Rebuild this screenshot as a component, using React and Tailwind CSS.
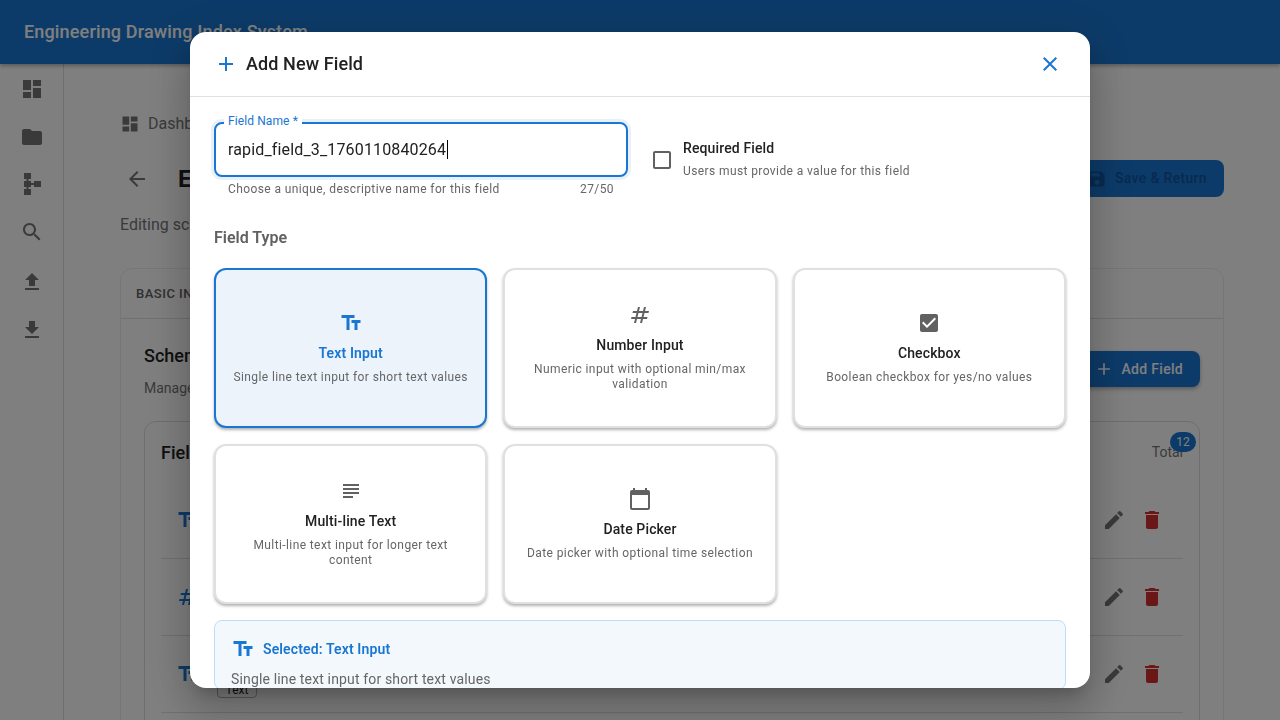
const paths = {
  dashboard: "M3 13h8V3H3v10zm0 8h8v-6H3v6zm10 0h8V11h-8v10zm0-18v6h8V3h-8z",
  folder: "M10 4H4c-1.1 0-1.99.9-1.99 2L2 18c0 1.1.9 2 2 2h16c1.1 0 2-.9 2-2V8c0-1.1-.9-2-2-2h-8l-2-2z",
  schema: "M14 9v2h-3V9H8.5V7H11V1H4v6h2.5v2H4v6h2.5v2H4v6h7v-6H8.5v-2H11v-2h3v2h7V9h-7z",
  search: "M15.5 14h-.79l-.28-.27C15.41 12.59 16 11.11 16 9.5 16 5.91 13.09 3 9.5 3S3 5.91 3 9.5 5.91 16 9.5 16c1.61 0 3.09-.59 4.23-1.57l.27.28v.79l5 4.99L20.49 19l-4.99-5zm-6 0C7.01 14 5 11.99 5 9.5S7.01 5 9.5 5 14 7.01 14 9.5 11.99 14 9.5 14z",
  upload: "M9 16h6v-6h4l-7-7-7 7h4zm-4 2h14v2H5z",
  download: "M19 9h-4V3H9v6H5l7 7 7-7zM5 18v2h14v-2H5z",
  back: "M20 11H7.83l5.59-5.59L12 4l-8 8 8 8 1.41-1.41L7.83 13H20v-2z",
  save: "M17 3H5c-1.11 0-2 .9-2 2v14c0 1.1.89 2 2 2h14c1.1 0 2-.9 2-2V7l-4-4zm-5 16c-1.66 0-3-1.34-3-3s1.34-3 3-3 3 1.34 3 3-1.34 3-3 3zm3-10H5V5h10v4z",
  add: "M19 13h-6v6h-2v-6H5v-2h6V5h2v6h6v2z",
  close: "M19 6.41 17.59 5 12 10.59 6.41 5 5 6.41 10.59 12 5 17.59 6.41 19 12 13.41 17.59 19 19 17.59 13.41 12z",
  edit: "M3 17.25V21h3.75L17.81 9.94l-3.75-3.75L3 17.25zM20.71 7.04c.39-.39.39-1.02 0-1.41l-2.34-2.34a.9959.9959 0 0 0-1.41 0l-1.83 1.83 3.75 3.75 1.83-1.83z",
  trash: "M6 19c0 1.1.9 2 2 2h8c1.1 0 2-.9 2-2V7H6v12zM19 4h-3.5l-1-1h-5l-1 1H5v2h14V4z",
  text: "M2.5 4v3h5v12h3V7h5V4h-13zm19 5h-9v3h3v7h3v-7h3V9z",
  number: "M20.5 10l.5-2h-4l1-4h-2l-1 4h-4l1-4h-2L9 8H5l-.5 2h4l-1 4h-4L3 16h4l-1 4h2l1-4h4l-1 4h2l1-4h4l.5-2h-4l1-4h4zm-7 4h-4l1-4h4l-1 4z",
  check: "M19 3H5c-1.11 0-2 .9-2 2v14c0 1.1.89 2 2 2h14c1.11 0 2-.9 2-2V5c0-1.1-.89-2-2-2zm-9 14l-5-5 1.41-1.41L10 14.17l7.59-7.59L19 8l-9 9z",
  blank: "M19 5v14H5V5h14m0-2H5c-1.1 0-2 .9-2 2v14c0 1.1.9 2 2 2h14c1.1 0 2-.9 2-2V5c0-1.1-.9-2-2-2z",
  subject: "M14 17H4v2h10v-2zm6-8H4v2h16V9zM4 15h16v-2H4v2zM4 5v2h16V5H4z",
  calendar: "M20 3h-1V1h-2v2H7V1H5v2H4c-1.1 0-2 .9-2 2v16c0 1.1.9 2 2 2h16c1.1 0 2-.9 2-2V5c0-1.1-.9-2-2-2zm0 18H4V8h16v13z",
};

const Icon = ({ name, className = "" }) => (
  <svg viewBox="0 0 24 24" fill="currentColor" className={`shrink-0 ${className}`}>
    <path d={paths[name]} />
  </svg>
);

const navIcons = ["dashboard", "folder", "schema", "search", "upload", "download"];
const navHeights = ["h-[48px]", "h-[48px]", "h-[46px]", "h-[50px]", "h-[50px]", "h-[46px]"];

const fieldTypes = [
  { icon: "text", title: "Text Input", desc: "Single line text input for short text values", selected: true },
  { icon: "number", title: "Number Input", desc: "Numeric input with optional min/max validation", twoLine: true },
  { icon: "check", title: "Checkbox", desc: "Boolean checkbox for yes/no values" },
  { icon: "subject", title: "Multi-line Text", desc: "Multi-line text input for longer text content", twoLine: true },
  { icon: "calendar", title: "Date Picker", desc: "Date picker with optional time selection" },
];

const rows = [
  { icon: "text", name: "field_name", chip: "Text" },
  { icon: "number", name: "field_count", chip: "Number" },
  { icon: "text", name: "field_label", chip: "Text" },
  { icon: "text", name: "field_notes", chip: "Text" },
];

const App = () => {
  return (
    <div className="relative h-screen overflow-hidden bg-white font-['Roboto',sans-serif] text-[#212121]">
      {/* page behind the dialog */}
      <header className="relative z-10 flex h-[64px] items-center bg-[#1976d2] px-[24px] pb-[1px] shadow-[0_2px_4px_rgba(0,0,0,0.3)]">
        <h1 className="text-[18px] font-medium tracking-[0.16px] text-white">Engineering Drawing Index System</h1>
      </header>
      <div className="flex h-[656px]">
        <aside className="flex w-[64px] shrink-0 flex-col items-center border-r border-[#dedede] pt-[1px] text-[#757575]">
          {navIcons.map((name, i) => (
            <div key={name} className={`flex w-full items-center justify-center ${navHeights[i]}`}>
              <Icon name={name} className="h-[24px] w-[24px]" />
            </div>
          ))}
        </aside>
        <main className="min-w-0 flex-1 px-[56px]">
          <div className="mt-[50px] flex h-[20px] items-center gap-[8px] text-[16px] text-[#757575]">
            <Icon name="dashboard" className="h-[20px] w-[20px]" />
            Dashboard
          </div>
          <div className="mt-[26px] flex h-[37px] items-center justify-between">
            <div className="flex items-center">
              <Icon name="back" className="ml-[5px] h-[24px] w-[24px] text-[#757575]" />
              <span className="ml-[29px] text-[24px] font-bold">Edit Schema</span>
            </div>
            <button className="flex h-[37px] w-[170px] items-center justify-end gap-[8px] rounded-[8px] bg-[#1976d2] pr-[17px] text-[14px] font-medium tracking-[0.33px] text-[#10549f]">
              <Icon name="save" className="h-[20px] w-[20px]" />
              Save &amp; Return
            </button>
          </div>
          <p className="mt-[18px] text-[16px] leading-[20px] text-[#757575]">Editing schema</p>
          <section className="mt-[33px] rounded-t-[12px] border border-[#ececec]">
            <div className="flex h-[50px] items-center border-b border-[#e0e0e0] px-[15px] text-[13px] font-medium tracking-[0.5px] text-[#616161]">
              BASIC INFO
            </div>
            <div className="px-[23px]">
              <div className="mt-[32px] flex items-start justify-between">
                <div className="-mt-[7px]">
                  <h2 className="text-[18px] font-medium leading-[24px]">Schema Fields</h2>
                  <p className="mt-[10px] text-[14px] leading-[20px] text-[#757575]">Manage fields</p>
                </div>
                <button className="flex h-[36px] w-[124px] items-center justify-end gap-[8px] rounded-[8px] bg-[#1976d2] pr-[17px] text-[14px] font-medium tracking-[0.3px] text-white shadow-[0_2px_4px_rgba(0,0,0,0.3)]">
                  <Icon name="add" className="h-[20px] w-[20px]" />
                  Add Field
                </button>
              </div>
              <div className="mt-[23px] rounded-t-[12px] border border-[#dddddd] px-[16px]">
                <div className="flex h-[60px] items-center">
                  <span className="text-[18px] font-medium">Fields</span>
                  <span className="relative ml-auto text-[14px] text-[#757575]">
                    Total
                    <span className="absolute right-[-13px] top-[-10px] flex h-[20px] w-[26px] items-center justify-center rounded-full bg-[#1976d2] text-[12px] text-white">12</span>
                  </span>
                </div>
                {rows.map((row) => (
                  <div key={row.name} className="flex h-[77px] items-center justify-between border-b border-[#e0e0e0]">
                    <div className="flex items-center">
                      <Icon name={row.icon} className="ml-[15px] h-[24px] w-[24px] text-[#1976d2]" />
                      <div className="ml-[17px] flex flex-col items-start">
                        <span className="text-[14px] leading-[24px]">{row.name}</span>
                        <span className="mt-[7px] flex h-[17px] w-[40px] items-center justify-center rounded-[4px] border border-[#b0b0b0] text-[12px]">{row.chip}</span>
                      </div>
                    </div>
                    <div className="flex items-center gap-[14px] pr-[19px]">
                      <Icon name="edit" className="h-[24px] w-[24px] text-[#757575]" />
                      <Icon name="trash" className="h-[24px] w-[24px] text-[#d32f2f]" />
                    </div>
                  </div>
                ))}
              </div>
            </div>
          </section>
        </main>
      </div>

      {/* dialog */}
      <div className="fixed inset-0 z-20 flex items-center justify-center bg-black/50">
        <div className="flex h-[656px] w-[900px] flex-col overflow-hidden rounded-[16px] bg-white shadow-[0_11px_15px_-7px_rgba(0,0,0,0.2),0_24px_38px_3px_rgba(0,0,0,0.14),0_9px_46px_8px_rgba(0,0,0,0.12)]">
          <div className="flex h-[65px] shrink-0 items-center justify-between border-b border-[#e0e0e0] pl-[24px] pr-[28px]">
            <div className="flex items-center gap-[8px]">
              <Icon name="add" className="h-[24px] w-[24px] text-[#1976d2]" />
              <span className="text-[18px] font-medium leading-[24px] tracking-[0.1px] text-[#212121]">Add New Field</span>
            </div>
            <Icon name="close" className="h-[24px] w-[24px] text-[#1976d2]" />
          </div>

          <div className="min-h-0 flex-1 overflow-hidden px-[24px] pt-[25px]">
            <div className="flex items-start gap-[22px]">
              <div className="w-[414px] shrink-0">
                <div className="relative flex h-[55px] items-center rounded-[8px] border-2 border-[#1976d2] pl-[12px] shadow-[0_0_0_3px_rgba(25,118,210,0.1)]">
                  <span className="absolute left-[8px] top-[-10px] bg-white px-[4px] text-[12px] leading-[14px] tracking-[0.1px] text-[#1976d2]">Field Name *</span>
                  <span className="text-[16px] leading-[24px] tracking-[0.15px] text-[#212121]">rapid_field_3_1760110840264</span>
                  <span className="ml-[1px] h-[19px] w-[1px] bg-black" />
                </div>
                <div className="flex justify-between px-[14px] pt-[5px] text-[12px] leading-[15px] tracking-[0.4px] text-[#666666]">
                  <span>Choose a unique, descriptive name for this field</span>
                  <span>27/50</span>
                </div>
              </div>
              <div className="flex items-start pt-[16px]">
                <Icon name="blank" className="mt-[10px] h-[24px] w-[24px] text-[#616161]" />
                <div className="ml-[9px]">
                  <div className="text-[14px] font-medium leading-[20px] tracking-[0.13px] text-[#212121]">Required Field</div>
                  <div className="mt-[6px] text-[12px] leading-[15px] tracking-[0.4px] text-[#666666]">Users must provide a value for this field</div>
                </div>
              </div>
            </div>

            <h3 className="mt-[29px] text-[16px] font-semibold leading-[24px] text-[#616161]">Field Type</h3>

            <div className="mt-[18px] grid grid-cols-3 gap-4">
              {fieldTypes.map((t) => (
                <div
                  key={t.title}
                  className={`flex h-[160px] flex-col items-center justify-center rounded-[12px] border-2 px-[16px] text-center shadow-[0_2px_3px_rgba(0,0,0,0.3)] ${t.selected ? "border-[#1976d2] bg-[#ecf3fb]" : "border-[#e0e0e0] bg-white"} ${t.twoLine ? "pb-[1px]" : ""}`}
                >
                  <Icon name={t.icon} className={`h-[24px] w-[24px] ${t.selected ? "text-[#1976d2]" : "text-[#616161]"}`} />
                  <div className={`mt-[8px] text-[14px] leading-[21px] tracking-[0.13px] ${t.selected ? "font-semibold text-[#1976d2]" : "font-medium text-[#212121]"}`}>{t.title}</div>
                  <div className="mt-[6px] text-[12px] leading-[15px] tracking-[0.4px] text-[#666666]">{t.desc}</div>
                </div>
              ))}
            </div>

            <div className="mt-[16px] rounded-[8px] border border-[#bbdefb] bg-[#f3f8fd] px-[16px] pt-[16px]">
              <div className="flex items-center gap-[8px]">
                <Icon name="text" className="h-[24px] w-[24px] text-[#1976d2]" />
                <span className="text-[14px] font-semibold leading-[24px] tracking-[0.13px] text-[#1976d2]">Selected: Text Input</span>
              </div>
              <p className="mt-[8px] text-[14px] leading-[20px] tracking-[0.15px] text-[#666666]">Single line text input for short text values</p>
            </div>
          </div>
        </div>
      </div>
    </div>
  );
};

export default App;
